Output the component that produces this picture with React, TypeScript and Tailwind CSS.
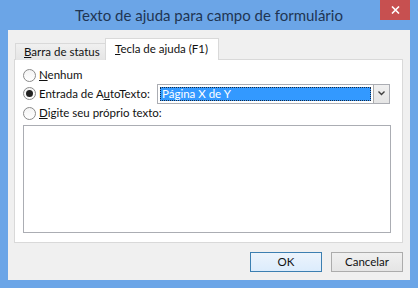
import React from 'react';

const font = { fontFamily: 'Lato, "Noto Sans", sans-serif' };

const Radio = ({ checked }: { checked?: boolean }) => (
  <span className="w-[13px] h-[13px] rounded-full border border-[#8a8a8a] bg-gradient-to-b from-[#f4f4f4] to-[#ffffff] flex items-center justify-center shrink-0">
    {checked && <span className="w-[7px] h-[7px] rounded-full bg-[#222]" />}
  </span>
);

const App = () => {
  return (
    <div
      className="w-[418px] h-[288px] bg-[#6ba5e7] flex flex-col text-[11.5px] text-[#111] whitespace-nowrap"
      style={font}
    >
      {/* Title bar */}
      <div className="h-[30px] relative flex items-center justify-center">
        <span className="text-[15px] text-[#1f3553]">
          Texto de ajuda para campo de formulário
        </span>
        <button className="absolute top-0 right-[8px] w-[30px] h-[20px] bg-[#c75050] flex items-center justify-center">
          <svg width="9" height="8" viewBox="0 0 9 8">
            <path d="M1 0.5 L8 7.5 M8 0.5 L1 7.5" stroke="#fff" strokeWidth="1.6" />
          </svg>
        </button>
      </div>

      {/* Dialog body */}
      <div className="flex-1 mx-[8px] mb-[8px] bg-[#f0f0f0] flex flex-col pt-[8px]">
        {/* Tabs */}
        <div className="flex items-end h-[22px] ml-[7px] relative z-10 -mb-px">
          <div className="h-[17px] w-[91px] border border-b-0 border-[#d9d9d9] bg-gradient-to-b from-[#f0f0f0] to-[#e5e5e5] flex items-center pl-[8px] leading-none">
            <span><span className="underline">B</span>arra de status</span>
          </div>
          <div className="-ml-px h-[22px] w-[114px] border border-b-0 border-[#d9d9d9] bg-white flex items-center pl-[9px] pb-[2px] leading-none">
            <span><span className="underline">T</span>ecla de ajuda (F1)</span>
          </div>
        </div>

        {/* Panel */}
        <div className="ml-[6px] w-[389px] h-[184px] border border-[#d9d9d9] bg-white pt-[7px] pl-[8px] flex flex-col">
          <div className="h-[16px] flex items-center gap-[3px]">
            <Radio />
            <span><span className="underline">N</span>enhum</span>
          </div>
          <div className="h-[21px] flex items-center">
            <div className="w-[134px] flex items-center gap-[3px]">
              <Radio checked />
              <span>Entrada de A<span className="underline">u</span>toTexto:</span>
            </div>
            <div className="w-[233px] h-[20px] border border-[#abadb3] bg-white flex items-center">
              <div className="flex-1 h-full p-[2px]">
                <div className="h-full bg-[#3399ff] text-white border border-dotted border-[#1a2a40] flex items-center pl-[1px] leading-none">
                  Página X de Y
                </div>
              </div>
              <div className="w-[16px] h-[18px] bg-gradient-to-b from-[#f0f0f0] to-[#e5e5e5] border-l border-[#acacac] flex items-center justify-center">
                <svg width="7" height="5" viewBox="0 0 7 5">
                  <path d="M0.5 0.5 L3.5 3.5 L6.5 0.5" stroke="#404040" strokeWidth="1.4" fill="none" />
                </svg>
              </div>
            </div>
          </div>
          <div className="h-[18px] flex items-center gap-[3px]">
            <Radio />
            <span><span className="underline">D</span>igite seu próprio texto:</span>
          </div>
          <div className="mt-[3px] w-[368px] h-[108px] border border-[#abadb3] bg-white" />
        </div>

        {/* Buttons */}
        <div className="flex justify-end gap-[9px] pr-[7px] mt-[9px]">
          <button className="w-[72px] h-[20px] border border-[#3c7fb1] bg-gradient-to-b from-[#ecf4fc] to-[#dcecfc] leading-none">
            OK
          </button>
          <button className="w-[72px] h-[20px] border border-[#acacac] bg-gradient-to-b from-[#f0f0f0] to-[#e5e5e5] leading-none">
            Cancelar
          </button>
        </div>
      </div>
    </div>
  );
};

export default App;
